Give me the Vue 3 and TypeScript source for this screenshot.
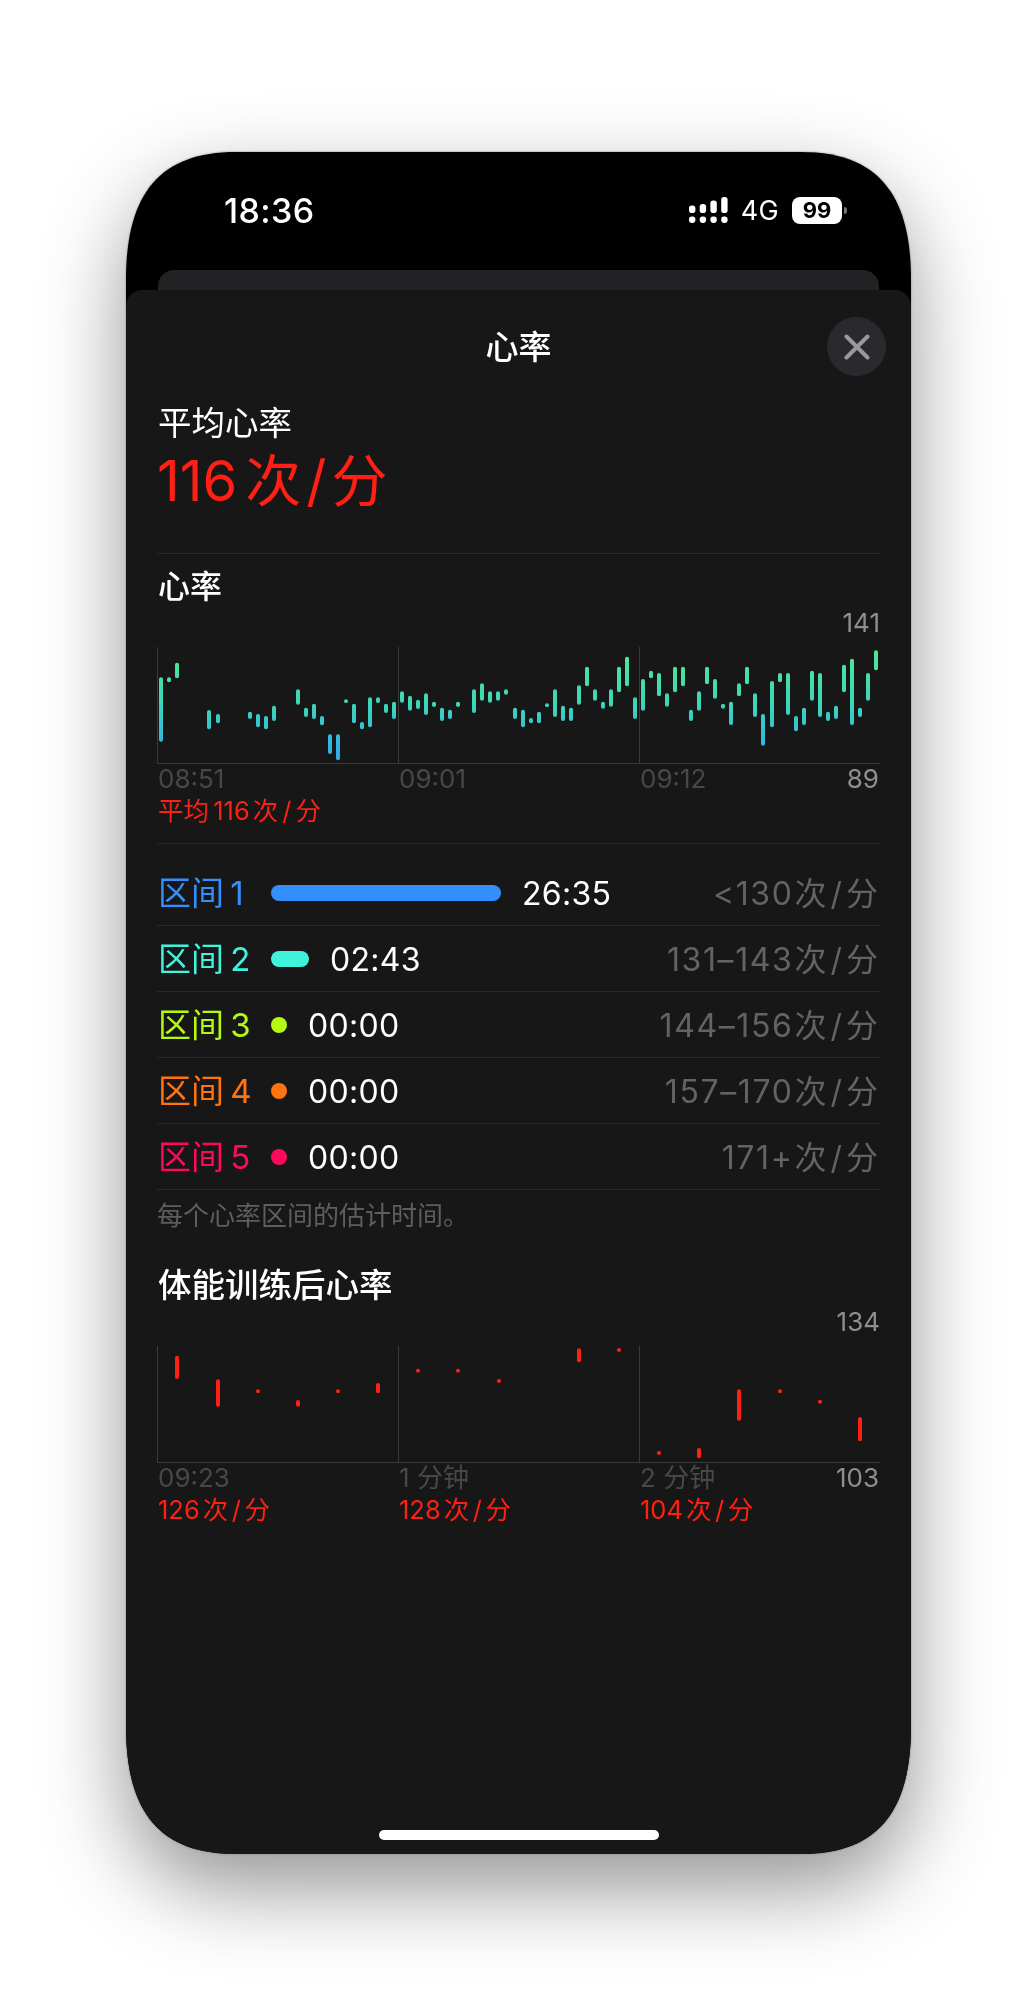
<script setup lang="ts">
type Bar = [number, number, number]

const z3 = (b: number[][]): Bar[] => b.map(([x, a, c]) => [Math.round(x / 3 + 150 - 157), a / 3 + 600 - 647, c / 3 + 600 - 647])
const z4 = (b: number[][]): Bar[] => b.map(([x, a, c]) => [Math.round(x / 3 + 510 - 157), a / 3 + 600 - 647, c / 3 + 600 - 647])
const y6 = (b: number[][], ox: number): Bar[] => b.map(([x, a, c]) => [Math.round(x / 3 + ox - 157), a / 3 + 1250 - 1346, c / 3 + 1250 - 1346])

const hrBars: Bar[] = [
  ...z3([[34,232,425],[58,232,247],[82,188,235],[178,330,388],[203,342,370],[299,335,357],[323,342,382],[347,348,388],[371,317,363],[444,268,314],[468,323,351],[492,311,357],[516,348,376],[540,403,462],[564,403,481],[588,298,309],[612,311,370],[636,366,388],[660,292,382],[684,292,309],[708,311,339],[732,305,357],[756,274,308],[780,287,332],[805,299,327],[829,280,345],[853,305,321],[877,323,363],[901,329,357],[925,305,321],[973,268,339],[997,250,302],[1021,274,308],[1045,274,302],[1069,268,284]]),
  ...z4([[14,323,357],[38,329,382],[62,354,370],[86,335,370],[110,310,321],[134,268,351],[158,317,363],[182,323,363],[207,256,314],[231,200,259],[255,268,302],[279,305,326],[303,268,320],[327,200,277],[351,170,259],[375,292,357],[399,237,332],[423,212,235],[447,219,289],[471,280,320],[495,200,277],[519,200,259],[544,329,363],[568,274,332],[592,200,253],[616,237,296],[640,311,326],[664,305,375],[688,250,289],[712,200,253],[736,280,351],[760,342,437],[785,243,382],[809,219,247],[833,219,345],[857,348,394],[881,323,375],[905,212,302],[929,219,351],[953,335,363],[977,317,357],[1001,194,277],[1025,176,375],[1049,323,351],[1073,219,302],[1097,151,211]])
]

const postBars: Bar[] = [
  ...y6([[82,317,387],[203,388,470],[323,418,430],[444,450,470],[564,418,430],[684,399,430],[805,356,368],[925,356,368],[1046,387,399]], 150),
  ...y6([[207,295,337],[327,294,306],[447,603,615],[568,594,625],[688,418,512],[809,418,430],[929,449,461],[1049,501,574]], 510)
]

const zones = [
  { name: '区间 1', color: '#328ffb', width: 230, time: '26:35', range: '<130' },
  { name: '区间 2', color: '#3ff2dc', width: 38, time: '02:43', range: '131–143' },
  { name: '区间 3', color: '#b4fa10', width: 16, time: '00:00', range: '144–156' },
  { name: '区间 4', color: '#ff7310', width: 16, time: '00:00', range: '157–170' },
  { name: '区间 5', color: '#ff0a5a', width: 16, time: '00:00', range: '171+' }
]

const signal = [
  { x: 0, top: 9.5 },
  { x: 10.7, top: 8 },
  { x: 21.4, top: 4.5 },
  { x: 32.2, top: 1 }
]
</script>

<template>
  <div class="page">
    <div class="shell">
      <div class="phone">
        <div class="status">
          <span class="clock">18:36</span>
          <div class="status-right">
            <svg class="signal" width="40" height="28" viewBox="0 0 40 28">
              <g v-for="s in signal" :key="s.x" fill="#fff">
                <rect :x="s.x" :y="s.top" width="6.4" :height="17 - s.top" rx="2.8" />
                <rect :x="s.x" y="20.5" width="6.4" height="6.4" rx="2.8" />
              </g>
            </svg>
            <span class="net">4G</span>
            <span class="battery">99</span>
            <span class="nub"></span>
          </div>
        </div>
        <div class="back-card"></div>
        <div class="sheet">
          <header class="head">
            <span></span>
            <h1 class="title">心率</h1>
            <button class="close" aria-label="关闭">
              <svg width="26" height="26" viewBox="0 0 26 26">
                <path d="M2.5 2.5 L23.5 23.5 M23.5 2.5 L2.5 23.5" stroke="#98989f" stroke-width="4" stroke-linecap="round" fill="none" />
              </svg>
            </button>
          </header>

          <div class="avg-label">平均心率</div>
          <div class="avg-value">116<i class="g"></i>次<i class="s">/</i>分</div>
          <div class="rule first"></div>

          <div class="sec">心率</div>
          <div class="max">141</div>
          <svg class="plot" width="723" height="117" viewBox="0 0 723 117">
            <defs>
              <linearGradient id="hr" gradientUnits="userSpaceOnUse" x1="0" y1="0" x2="0" y2="116">
                <stop offset="0" stop-color="#4eec8e" />
                <stop offset="0.5" stop-color="#3dd5bb" />
                <stop offset="1" stop-color="#2ea6ee" />
              </linearGradient>
            </defs>
            <path d="M.5 0V116.5H723M241.5 0V116M482.5 0V116" stroke="#3a3a3c" stroke-width="1" fill="none" />
            <rect v-for="(b, i) in hrBars" :key="i" :x="b[0] - 2" :y="b[1]" width="4" :height="b[2] - b[1]" rx="2" fill="url(#hr)" />
          </svg>
          <div class="axis">
            <span>08:51</span>
            <span>09:01</span>
            <span class="last"><span>09:12</span><em>89</em></span>
          </div>
          <div class="red">平均 116<i class="g2"></i>次<i class="s2">/</i>分</div>
          <div class="rule second"></div>

          <ul class="zones">
            <li v-for="z in zones" :key="z.name" class="zone">
              <span class="zone-name" :style="{ color: z.color }">{{ z.name }}</span>
              <span class="zone-bar" :style="{ width: z.width + 'px', background: z.color }"></span>
              <span class="zone-time">{{ z.time }}</span>
              <span class="zone-range"><span class="zone-num">{{ z.range }}</span>次<i class="s2">/</i>分</span>
            </li>
          </ul>
          <p class="note">每个心率区间的估计时间。</p>

          <div class="sec sec-two">体能训练后心率</div>
          <div class="max max-two">134</div>
          <svg class="plot" width="723" height="117" viewBox="0 0 723 117">
            <path d="M.5 0V116.5H723M241.5 0V116M482.5 0V116" stroke="#3a3a3c" stroke-width="1" fill="none" />
            <rect v-for="(b, i) in postBars" :key="i" :x="b[0] - 2" :y="b[1]" width="4" :height="b[2] - b[1]" rx="2" fill="#ff1f14" />
          </svg>
          <div class="axis">
            <span>09:23</span>
            <span>1 分钟</span>
            <span class="last"><span>2 分钟</span><em>103</em></span>
          </div>
          <div class="axis reds">
            <span>126<i class="g2"></i>次<i class="s3">/</i>分</span>
            <span>128<i class="g2"></i>次<i class="s3">/</i>分</span>
            <span>104<i class="g2"></i>次<i class="s3">/</i>分</span>
          </div>

          <div class="home"></div>
        </div>
      </div>
    </div>
  </div>
</template>

<style scoped>
.page {
  box-sizing: border-box;
  height: 2016px;
  padding: 152px 125px 0 126px;
  overflow: hidden;
  background: #fff;
  font-family: Inter, "Noto Sans CJK SC", sans-serif;
}
.shell {
  width: 785px;
  height: 1702px;
  filter: drop-shadow(0 0 1px #8c8c8c) drop-shadow(0 34px 42px rgba(0, 0, 0, 0.42));
}
.phone {
  width: 785px;
  height: 1702px;
  background: #000;
  display: flex;
  flex-direction: column;
  clip-path: path('M0 128 C0 40 35 0 110 0 H675 C750 0 785 40 785 128 V1574 C785 1662 750 1702 675 1702 H110 C35 1702 0 1662 0 1574 Z');
}
.status {
  flex: none;
  height: 116px;
  padding: 0 64px 0 98px;
  display: flex;
  align-items: center;
  justify-content: space-between;
  color: #fff;
}
.clock {
  font-size: 34px;
  font-weight: 500;
  letter-spacing: 0.4px;
}
.status-right {
  display: flex;
  align-items: center;
}
.signal {
  display: block;
}
.net {
  margin-left: 12px;
  font-size: 27px;
  letter-spacing: 0.3px;
}
.battery {
  margin-left: 13px;
  width: 50px;
  height: 27px;
  border-radius: 8px;
  background: #fff;
  color: #000;
  font-size: 22px;
  font-weight: 700;
  line-height: 27px;
  text-align: center;
}
.nub {
  margin-left: 2px;
  width: 3px;
  height: 7px;
  border-radius: 0 3px 3px 0;
  background: #77777a;
}
.back-card {
  flex: none;
  height: 20px;
  margin: 2px 32px 0;
  border-radius: 16px 16px 0 0;
  background: #222224;
}
.sheet {
  flex: 1;
  min-height: 0;
  display: flex;
  flex-direction: column;
  padding: 27px 31px 14px;
  border-radius: 16px 16px 0 0;
  background: #171717;
  color: #fff;
}
.head {
  display: grid;
  grid-template-columns: 1fr auto 1fr;
  align-items: center;
  height: 59px;
}
.title {
  margin: 1px 0 0;
  font-size: 33px;
  font-weight: 500;
  line-height: 46px;
}
.close {
  justify-self: end;
  margin-right: -6px;
  width: 59px;
  height: 59px;
  padding: 0;
  border: 0;
  border-radius: 50%;
  background: #2a2a2e;
  display: flex;
  align-items: center;
  justify-content: center;
}
.avg-label {
  margin-top: 27px;
  font-size: 33.5px;
  line-height: 40px;
  padding-left: 1px;
}
.avg-value {
  margin-top: 3px;
  height: 70px;
  font-size: 56px;
  line-height: 70px;
  color: #ff1f14;
  font-weight: 400;
}
i {
  font-style: normal;
}
.g2 {
  margin-left: 3px;
}
.avg-value .g {
  margin-left: 8px;
}
.s {
  margin: 0 5px;
}
.s2 {
  margin: 0 4px;
}
.s3 {
  margin: 0 3.5px;
}
.rule {
  height: 1px;
  background: #2a2a2c;
}
.rule.first {
  margin-top: 37px;
}
.sec {
  margin-top: 13px;
  font-size: 32px;
  font-weight: 500;
  line-height: 40px;
  padding-left: 1px;
}
.sec-two {
  margin-top: 34px;
  font-size: 33.5px;
}
.max {
  height: 30px;
  margin-top: 1px;
  margin-bottom: -1px;
  font-size: 26px;
  line-height: 30px;
  color: #8e8e93;
  text-align: right;
}
.max-two {
  margin-top: 2px;
}
.plot {
  display: block;
  margin-top: 10px;
}
.axis {
  display: grid;
  grid-template-columns: 241px 241px 241px;
  height: 30px;
  font-size: 26px;
  line-height: 30px;
  color: #48484a;
  padding-left: 1px;
  margin-right: 1px;
}
.axis .last {
  display: flex;
  justify-content: space-between;
  margin-right: -1px;
  padding-right: 3px;
}
.axis em {
  font-style: normal;
  color: #8e8e93;
}
.axis.reds {
  margin-top: 2px;
  font-size: 25.5px;
  color: #ff1f14;
}
.red {
  margin-top: 2px;
  height: 30px;
  font-size: 25.5px;
  line-height: 30px;
  color: #ff1f14;
  padding-left: 1px;
  word-spacing: -3px;
}
.rule.second {
  margin-top: 17px;
}
.zones {
  margin: 16px 0 0;
  padding: 0;
  list-style: none;
}
.zone {
  box-sizing: border-box;
  height: 66px;
  display: flex;
  align-items: baseline;
  padding-top: 13px;
  border-bottom: 1px solid #2a2a2c;
  font-size: 32px;
  line-height: 40px;
}
.zone-name {
  flex: none;
  width: 114px;
  padding-left: 1px;
  box-sizing: border-box;
  font-size: 33px;
  word-spacing: -3px;
}
.zone-bar {
  flex: none;
  align-self: center;
  height: 16px;
  margin-top: -13px;
  border-radius: 8px;
}
.zone-time {
  margin-left: 21px;
  letter-spacing: 0.3px;
}
.zone-range {
  margin-left: auto;
  padding-right: 2px;
  color: #636366;
}
.zone-num {
  letter-spacing: 1.6px;
  margin-right: 1px;
}
.note {
  margin: 11px 0 0;
  font-size: 26px;
  line-height: 30px;
  color: #5e5e62;
}
.home {
  margin-top: auto;
  align-self: center;
  width: 280px;
  height: 10px;
  border-radius: 5px;
  background: #fff;
}
</style>

<style>
html, body {
  margin: 0;
  background: #fff;
}
</style>
